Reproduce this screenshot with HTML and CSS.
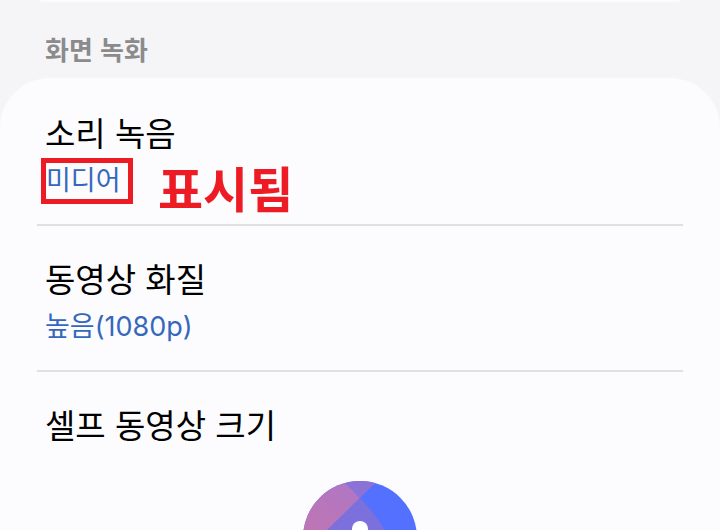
FILE: index.html
```html
<!DOCTYPE html>
<html lang="ko">
<head>
  <meta charset="UTF-8" />
  <meta name="viewport" content="width=device-width, initial-scale=1.0" />
  <title>화면 녹화</title>
  <link rel="stylesheet" href="styles.css">
</head>
<body>

  <div class="card-end"></div>

  <h2 class="section-title">화면 녹화</h2>

  <main class="card">
    <a class="row" href="#sound">
      <span class="title">소리 녹음</span>
      <span class="value marked">
        <span class="mark">미디어</span>
        <strong class="note">표시됨</strong>
      </span>
    </a>
    <a class="row" href="#quality">
      <span class="title">동영상 화질</span>
      <span class="value">높음(1080p)</span>
    </a>
    <a class="row" href="#size">
      <span class="title">셀프 동영상 크기</span>
    </a>
  </main>

  <button class="floating" type="button" aria-label="도우미">
    <svg viewBox="0 0 114 114" width="114" height="114">
      <defs>
        <linearGradient id="pink" gradientUnits="userSpaceOnUse" x1="0" y1="50" x2="50" y2="5">
          <stop offset="0" stop-color="#c075b2" />
          <stop offset="1" stop-color="#b077c4" />
        </linearGradient>
        <clipPath id="round"><circle cx="57" cy="57" r="57" /></clipPath>
      </defs>
      <g clip-path="url(#round)">
        <rect width="114" height="114" fill="#5370ff" />
        <path d="M0 0H40Q49 8 57 17L0 73Z" fill="url(#pink)" />
        <path d="M40 0H74L57 17Q49 8 40 0Z" fill="#8c71d6" />
        <path d="M57 17Q74 34 87 58V114H0V73Z" fill="#7b70dc" />
        <circle cx="57" cy="48" r="8" fill="#fff" />
      </g>
    </svg>
  </button>

</body>
</html>
```

FILE: styles.css
```css
* {
  box-sizing: border-box;
}

body {
  margin: 0;
  height: 100vh;
  overflow: hidden;
  display: flex;
  flex-direction: column;
  position: relative;
  background-color: #f5f5f7;
  color: #000;
  font-family: "Noto Sans CJK KR", sans-serif;
}

.card-end {
  height: 2px;
  margin: 0 40px;
  background-color: #fcfcfe;
  border-radius: 0 0 40px 40px;
}

.section-title {
  margin: 0;
  padding: 27px 45px 9px;
  font-size: 26px;
  line-height: 40px;
  font-weight: 700;
  color: #8b8b8d;
}

.card {
  flex: 1;
  padding: 2px 37px;
  background-color: #fcfcfe;
  border-radius: 50px 50px 0 0;
}

.row {
  display: flex;
  flex-direction: column;
  gap: 3px;
  padding: 30px 8px 19px;
  border-bottom: 2px solid #e0e0e2;
  color: inherit;
  text-decoration: none;
}

.row:last-child {
  border-bottom: none;
}

.title {
  font-size: 33px;
  line-height: 44px;
}

.value {
  font-family: Inter, "Noto Sans CJK KR", sans-serif;
  font-size: 27px;
  line-height: 48px;
  color: #3568bd;
}

.marked {
  position: relative;
  display: flex;
  align-items: center;
  height: 48px;
}

/* red box around the chosen value */
.mark {
  margin-left: -4px;
  padding-right: 7px;
  line-height: 36px;
  border: 5px solid #ed1c24;
}

.note {
  position: absolute;
  left: 113px;
  top: 4px;
  font-size: 49px;
  line-height: 60px;
  color: #ed1c24;
}

.floating {
  position: absolute;
  left: 50%;
  bottom: -65px;
  transform: translateX(-50%);
  padding: 0;
  border: none;
  border-radius: 50%;
  background: none;
  cursor: pointer;
}

.floating svg {
  display: block;
}
```
